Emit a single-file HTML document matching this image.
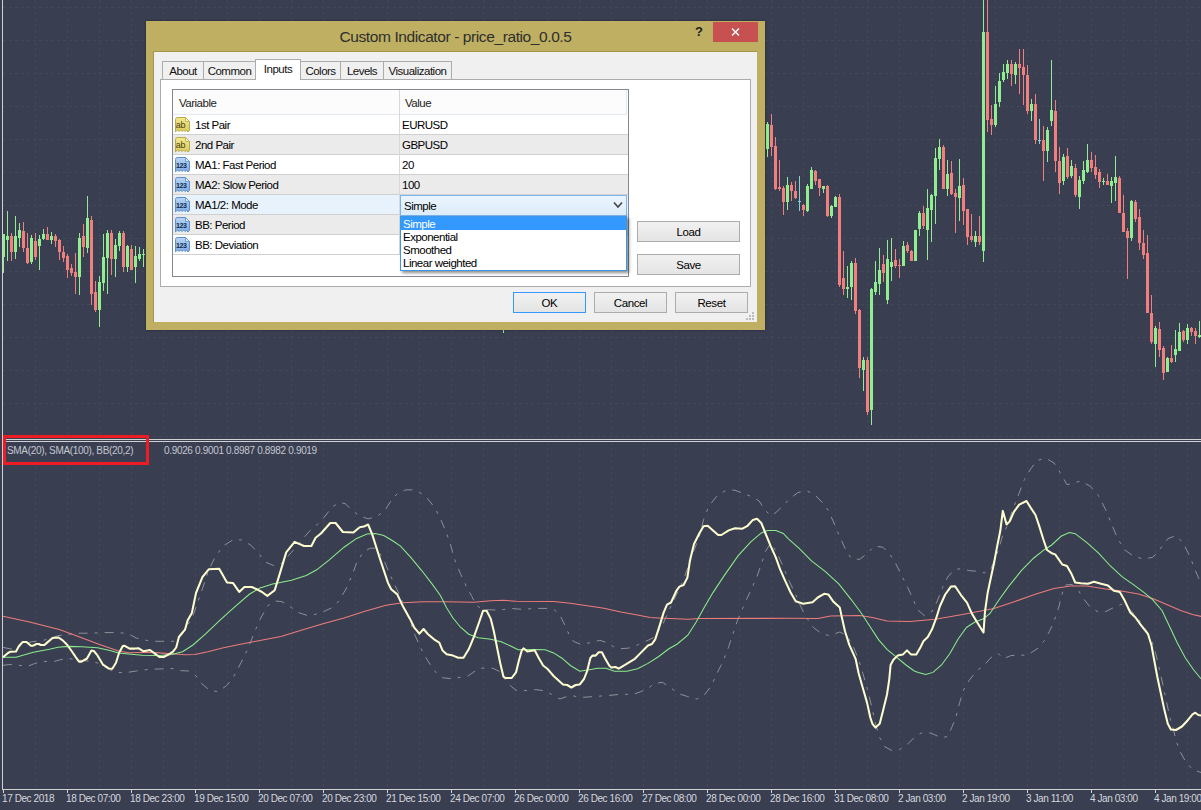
<!DOCTYPE html>
<html lang="en">
<head>
<meta charset="utf-8">
<title>Custom Indicator - price_ratio_0.0.5</title>
<style>
html,body{margin:0;padding:0;}
body{width:1201px;height:810px;overflow:hidden;background:#393e50;position:relative;font-family:"Liberation Sans",sans-serif;}
.chart{position:absolute;left:0;top:0;}
.tl{position:absolute;top:792px;font-size:10px;line-height:14px;color:#d6d8de;white-space:nowrap;letter-spacing:-0.42px;}
.ind{position:absolute;top:444px;font-size:10px;line-height:14px;color:#c4c7d0;white-space:nowrap;letter-spacing:-0.33px;}
.redbox{position:absolute;left:3px;top:435px;width:140px;height:24px;border:3px solid #ed1c24;}
/* dialog */
.dlg{position:absolute;left:146px;top:21px;width:619px;height:309px;background:#beaf62;box-shadow:0 0 2px rgba(20,22,35,.55);}
.dlg .title{position:absolute;left:0;right:0;top:6px;text-align:center;font-size:15.5px;line-height:20px;color:#2e2e2e;letter-spacing:-0.4px;}
.dlg .help{position:absolute;left:549px;top:3px;font-size:13px;font-weight:bold;line-height:16px;color:#222;}
.dlg .close{position:absolute;left:567px;top:1px;width:45px;height:20px;background:#c75050;}
.client{position:absolute;left:7px;top:30px;width:603px;height:270px;background:#f0f0f0;border:1px solid #a39648;border-right-color:#beaf62;border-bottom-color:#beaf62;}
.tab{position:absolute;top:9px;height:18px;box-sizing:border-box;border:1px solid #acacac;border-bottom:none;background:#f0f0f0;font-size:11.5px;line-height:18px;color:#111;text-align:center;letter-spacing:-0.5px;}
.tab.sel{top:7px;height:21px;background:#fff;z-index:2;line-height:18px;}
.page{position:absolute;left:6px;top:27px;width:591px;height:208px;box-sizing:border-box;background:#fff;border:1px solid #acacac;}
.list{position:absolute;left:18px;top:37px;width:457px;height:188px;box-sizing:border-box;border:1px solid #828790;background:#fff;overflow:hidden;}
.hdr{position:absolute;left:0;top:0;width:453px;height:24px;border-bottom:1px solid #e3e9f1;border-right:1px solid #e3e9f1;background:#fcfcfc;}
.hdr span{position:absolute;top:6px;font-size:11.5px;line-height:14px;color:#222;letter-spacing:-0.5px;}
.row{position:absolute;left:0;width:455px;height:19px;border-bottom:1px solid #d0d0d0;font-size:11.5px;line-height:21px;color:#000;letter-spacing:-0.5px;}
.row.alt{background:#ebebeb;}
.row.hl{background:#e8f2fc;}
.row .n{position:absolute;left:22px;top:0;}
.row .v{position:absolute;left:229px;top:0;}
.row .ic{position:absolute;left:1px;top:2px;line-height:0;}
.coldiv{position:absolute;left:226px;top:0;width:1px;height:165px;background:#d8d8d8;}
.combo{position:absolute;left:227px;top:105px;width:227px;height:21px;box-sizing:border-box;border:1px solid #7eb4ea;background:linear-gradient(#ebf4fc,#dcecfc);font-size:11.5px;line-height:21px;letter-spacing:-0.5px;}
.combo span{position:absolute;left:3px;top:0;}
.drop{position:absolute;left:254px;top:195px;width:227px;height:55px;box-sizing:border-box;border:1px solid #3c96e8;background:#fff;box-shadow:2px 2px 3px rgba(0,0,0,.45);font-size:11.5px;letter-spacing:-0.5px;z-index:5;}
.drop div{height:13px;line-height:15px;padding-left:2px;color:#000;}
.drop div.s{background:#3399ff;color:#fff;}
.btn{position:absolute;height:21px;box-sizing:border-box;border:1px solid #acacac;background:linear-gradient(#f1f1f1,#e4e4e4);font-size:11.5px;line-height:20px;text-align:center;color:#000;letter-spacing:-0.4px;}
.btn.def{border-color:#3399ff;}
</style>
</head>
<body>
<svg class="chart" width="1201" height="810" viewBox="0 0 1201 810">
<g stroke="#42475a" stroke-width="1" stroke-dasharray="3 3" shape-rendering="crispEdges"><line x1="35.5" y1="0" x2="35.5" y2="438"/><line x1="35.5" y1="442" x2="35.5" y2="789"/><line x1="67.5" y1="0" x2="67.5" y2="438"/><line x1="67.5" y1="442" x2="67.5" y2="789"/><line x1="99.5" y1="0" x2="99.5" y2="438"/><line x1="99.5" y1="442" x2="99.5" y2="789"/><line x1="131.5" y1="0" x2="131.5" y2="438"/><line x1="131.5" y1="442" x2="131.5" y2="789"/><line x1="163.5" y1="0" x2="163.5" y2="438"/><line x1="163.5" y1="442" x2="163.5" y2="789"/><line x1="195.5" y1="0" x2="195.5" y2="438"/><line x1="195.5" y1="442" x2="195.5" y2="789"/><line x1="227.5" y1="0" x2="227.5" y2="438"/><line x1="227.5" y1="442" x2="227.5" y2="789"/><line x1="259.5" y1="0" x2="259.5" y2="438"/><line x1="259.5" y1="442" x2="259.5" y2="789"/><line x1="291.5" y1="0" x2="291.5" y2="438"/><line x1="291.5" y1="442" x2="291.5" y2="789"/><line x1="323.5" y1="0" x2="323.5" y2="438"/><line x1="323.5" y1="442" x2="323.5" y2="789"/><line x1="355.5" y1="0" x2="355.5" y2="438"/><line x1="355.5" y1="442" x2="355.5" y2="789"/><line x1="387.5" y1="0" x2="387.5" y2="438"/><line x1="387.5" y1="442" x2="387.5" y2="789"/><line x1="419.5" y1="0" x2="419.5" y2="438"/><line x1="419.5" y1="442" x2="419.5" y2="789"/><line x1="451.5" y1="0" x2="451.5" y2="438"/><line x1="451.5" y1="442" x2="451.5" y2="789"/><line x1="483.5" y1="0" x2="483.5" y2="438"/><line x1="483.5" y1="442" x2="483.5" y2="789"/><line x1="515.5" y1="0" x2="515.5" y2="438"/><line x1="515.5" y1="442" x2="515.5" y2="789"/><line x1="547.5" y1="0" x2="547.5" y2="438"/><line x1="547.5" y1="442" x2="547.5" y2="789"/><line x1="579.5" y1="0" x2="579.5" y2="438"/><line x1="579.5" y1="442" x2="579.5" y2="789"/><line x1="611.5" y1="0" x2="611.5" y2="438"/><line x1="611.5" y1="442" x2="611.5" y2="789"/><line x1="643.5" y1="0" x2="643.5" y2="438"/><line x1="643.5" y1="442" x2="643.5" y2="789"/><line x1="675.5" y1="0" x2="675.5" y2="438"/><line x1="675.5" y1="442" x2="675.5" y2="789"/><line x1="707.5" y1="0" x2="707.5" y2="438"/><line x1="707.5" y1="442" x2="707.5" y2="789"/><line x1="739.5" y1="0" x2="739.5" y2="438"/><line x1="739.5" y1="442" x2="739.5" y2="789"/><line x1="771.5" y1="0" x2="771.5" y2="438"/><line x1="771.5" y1="442" x2="771.5" y2="789"/><line x1="803.5" y1="0" x2="803.5" y2="438"/><line x1="803.5" y1="442" x2="803.5" y2="789"/><line x1="835.5" y1="0" x2="835.5" y2="438"/><line x1="835.5" y1="442" x2="835.5" y2="789"/><line x1="867.5" y1="0" x2="867.5" y2="438"/><line x1="867.5" y1="442" x2="867.5" y2="789"/><line x1="899.5" y1="0" x2="899.5" y2="438"/><line x1="899.5" y1="442" x2="899.5" y2="789"/><line x1="931.5" y1="0" x2="931.5" y2="438"/><line x1="931.5" y1="442" x2="931.5" y2="789"/><line x1="963.5" y1="0" x2="963.5" y2="438"/><line x1="963.5" y1="442" x2="963.5" y2="789"/><line x1="995.5" y1="0" x2="995.5" y2="438"/><line x1="995.5" y1="442" x2="995.5" y2="789"/><line x1="1027.5" y1="0" x2="1027.5" y2="438"/><line x1="1027.5" y1="442" x2="1027.5" y2="789"/><line x1="1059.5" y1="0" x2="1059.5" y2="438"/><line x1="1059.5" y1="442" x2="1059.5" y2="789"/><line x1="1091.5" y1="0" x2="1091.5" y2="438"/><line x1="1091.5" y1="442" x2="1091.5" y2="789"/><line x1="1123.5" y1="0" x2="1123.5" y2="438"/><line x1="1123.5" y1="442" x2="1123.5" y2="789"/><line x1="1155.5" y1="0" x2="1155.5" y2="438"/><line x1="1155.5" y1="442" x2="1155.5" y2="789"/><line x1="1187.5" y1="0" x2="1187.5" y2="438"/><line x1="1187.5" y1="442" x2="1187.5" y2="789"/><line x1="3" y1="7.5" x2="1201" y2="7.5"/><line x1="3" y1="40.5" x2="1201" y2="40.5"/><line x1="3" y1="73.5" x2="1201" y2="73.5"/><line x1="3" y1="106.5" x2="1201" y2="106.5"/><line x1="3" y1="139.5" x2="1201" y2="139.5"/><line x1="3" y1="172.5" x2="1201" y2="172.5"/><line x1="3" y1="205.5" x2="1201" y2="205.5"/><line x1="3" y1="238.5" x2="1201" y2="238.5"/><line x1="3" y1="271.5" x2="1201" y2="271.5"/><line x1="3" y1="304.5" x2="1201" y2="304.5"/><line x1="3" y1="337.5" x2="1201" y2="337.5"/><line x1="3" y1="370.5" x2="1201" y2="370.5"/><line x1="3" y1="403.5" x2="1201" y2="403.5"/><line x1="3" y1="436.5" x2="1201" y2="436.5"/></g>
<g shape-rendering="crispEdges"><rect x="3" y="234" width="1" height="39" fill="#90ee90"/><rect x="2" y="234" width="3" height="23" fill="#90ee90"/><rect x="7" y="211" width="1" height="50" fill="#90ee90"/><rect x="6" y="236" width="3" height="4" fill="#90ee90"/><rect x="11" y="233" width="1" height="28" fill="#f08080"/><rect x="10" y="236" width="3" height="16" fill="#f08080"/><rect x="15" y="216" width="1" height="43" fill="#90ee90"/><rect x="14" y="236" width="3" height="16" fill="#90ee90"/><rect x="19" y="223" width="1" height="24" fill="#90ee90"/><rect x="18" y="230" width="3" height="8" fill="#90ee90"/><rect x="23" y="222" width="1" height="30" fill="#f08080"/><rect x="22" y="231" width="3" height="17" fill="#f08080"/><rect x="27" y="233" width="1" height="31" fill="#f08080"/><rect x="26" y="248" width="3" height="15" fill="#f08080"/><rect x="31" y="235" width="1" height="29" fill="#90ee90"/><rect x="30" y="238" width="3" height="24" fill="#90ee90"/><rect x="35" y="233" width="1" height="27" fill="#f08080"/><rect x="34" y="241" width="3" height="16" fill="#f08080"/><rect x="39" y="235" width="1" height="35" fill="#90ee90"/><rect x="38" y="239" width="3" height="7" fill="#90ee90"/><rect x="43" y="229" width="1" height="11" fill="#90ee90"/><rect x="42" y="234" width="3" height="5" fill="#90ee90"/><rect x="47" y="227" width="1" height="13" fill="#f08080"/><rect x="46" y="234" width="3" height="6" fill="#f08080"/><rect x="51" y="232" width="1" height="12" fill="#90ee90"/><rect x="50" y="236" width="3" height="4" fill="#90ee90"/><rect x="55" y="234" width="1" height="13" fill="#f08080"/><rect x="54" y="236" width="3" height="5" fill="#f08080"/><rect x="59" y="239" width="1" height="21" fill="#f08080"/><rect x="58" y="240" width="3" height="12" fill="#f08080"/><rect x="63" y="246" width="1" height="16" fill="#f08080"/><rect x="62" y="252" width="3" height="6" fill="#f08080"/><rect x="67" y="254" width="1" height="24" fill="#f08080"/><rect x="66" y="256" width="3" height="14" fill="#f08080"/><rect x="71" y="264" width="1" height="12" fill="#f08080"/><rect x="70" y="268" width="3" height="5" fill="#f08080"/><rect x="75" y="253" width="1" height="41" fill="#f08080"/><rect x="74" y="272" width="3" height="5" fill="#f08080"/><rect x="79" y="233" width="1" height="62" fill="#90ee90"/><rect x="78" y="238" width="3" height="39" fill="#90ee90"/><rect x="83" y="224" width="1" height="33" fill="#f08080"/><rect x="82" y="236" width="3" height="11" fill="#f08080"/><rect x="87" y="196" width="1" height="57" fill="#90ee90"/><rect x="86" y="218" width="3" height="30" fill="#90ee90"/><rect x="91" y="216" width="1" height="89" fill="#f08080"/><rect x="90" y="220" width="3" height="74" fill="#f08080"/><rect x="95" y="281" width="1" height="31" fill="#f08080"/><rect x="94" y="292" width="3" height="18" fill="#f08080"/><rect x="99" y="276" width="1" height="51" fill="#90ee90"/><rect x="98" y="282" width="3" height="28" fill="#90ee90"/><rect x="103" y="234" width="1" height="57" fill="#90ee90"/><rect x="102" y="257" width="3" height="26" fill="#90ee90"/><rect x="107" y="230" width="1" height="64" fill="#90ee90"/><rect x="106" y="233" width="3" height="25" fill="#90ee90"/><rect x="111" y="230" width="1" height="45" fill="#f08080"/><rect x="110" y="233" width="3" height="26" fill="#f08080"/><rect x="115" y="239" width="1" height="38" fill="#90ee90"/><rect x="114" y="245" width="3" height="14" fill="#90ee90"/><rect x="119" y="231" width="1" height="20" fill="#90ee90"/><rect x="118" y="233" width="3" height="13" fill="#90ee90"/><rect x="123" y="231" width="1" height="41" fill="#f08080"/><rect x="122" y="233" width="3" height="34" fill="#f08080"/><rect x="127" y="245" width="1" height="27" fill="#90ee90"/><rect x="126" y="246" width="3" height="21" fill="#90ee90"/><rect x="131" y="245" width="1" height="25" fill="#f08080"/><rect x="130" y="249" width="3" height="21" fill="#f08080"/><rect x="135" y="246" width="1" height="37" fill="#90ee90"/><rect x="134" y="256" width="3" height="11" fill="#90ee90"/><rect x="139" y="247" width="1" height="14" fill="#90ee90"/><rect x="138" y="254" width="3" height="5" fill="#90ee90"/><rect x="143" y="249" width="1" height="18" fill="#90ee90"/><rect x="142" y="254" width="3" height="1" fill="#90ee90"/><rect x="503" y="329" width="1" height="4" fill="#90ee90"/><rect x="502" y="329" width="3" height="1" fill="#90ee90"/><rect x="767" y="122" width="1" height="35" fill="#90ee90"/><rect x="766" y="124" width="3" height="25" fill="#90ee90"/><rect x="771" y="114" width="1" height="42" fill="#f08080"/><rect x="770" y="125" width="3" height="22" fill="#f08080"/><rect x="775" y="137" width="1" height="53" fill="#f08080"/><rect x="774" y="146" width="3" height="43" fill="#f08080"/><rect x="779" y="160" width="1" height="31" fill="#f08080"/><rect x="778" y="187" width="3" height="2" fill="#f08080"/><rect x="783" y="186" width="1" height="29" fill="#f08080"/><rect x="782" y="188" width="3" height="14" fill="#f08080"/><rect x="787" y="177" width="1" height="33" fill="#90ee90"/><rect x="786" y="185" width="3" height="17" fill="#90ee90"/><rect x="791" y="182" width="1" height="19" fill="#f08080"/><rect x="790" y="185" width="3" height="6" fill="#f08080"/><rect x="795" y="181" width="1" height="18" fill="#f08080"/><rect x="794" y="191" width="3" height="7" fill="#f08080"/><rect x="799" y="176" width="1" height="35" fill="#7fd6d0"/><rect x="798" y="201" width="3" height="1" fill="#7fd6d0"/><rect x="803" y="204" width="1" height="12" fill="#f08080"/><rect x="802" y="205" width="3" height="5" fill="#f08080"/><rect x="807" y="184" width="1" height="28" fill="#90ee90"/><rect x="806" y="186" width="3" height="25" fill="#90ee90"/><rect x="811" y="167" width="1" height="22" fill="#90ee90"/><rect x="810" y="170" width="3" height="19" fill="#90ee90"/><rect x="815" y="170" width="1" height="15" fill="#f08080"/><rect x="814" y="171" width="3" height="10" fill="#f08080"/><rect x="819" y="179" width="1" height="17" fill="#f08080"/><rect x="818" y="179" width="3" height="9" fill="#f08080"/><rect x="823" y="186" width="1" height="7" fill="#90ee90"/><rect x="822" y="186" width="3" height="3" fill="#90ee90"/><rect x="827" y="185" width="1" height="32" fill="#f08080"/><rect x="826" y="186" width="3" height="30" fill="#f08080"/><rect x="831" y="205" width="1" height="13" fill="#90ee90"/><rect x="830" y="206" width="3" height="10" fill="#90ee90"/><rect x="835" y="196" width="1" height="11" fill="#90ee90"/><rect x="834" y="197" width="3" height="10" fill="#90ee90"/><rect x="839" y="194" width="1" height="93" fill="#f08080"/><rect x="838" y="197" width="3" height="88" fill="#f08080"/><rect x="843" y="251" width="1" height="44" fill="#f08080"/><rect x="842" y="278" width="3" height="11" fill="#f08080"/><rect x="847" y="266" width="1" height="32" fill="#90ee90"/><rect x="846" y="287" width="3" height="2" fill="#90ee90"/><rect x="851" y="261" width="1" height="39" fill="#90ee90"/><rect x="850" y="263" width="3" height="24" fill="#90ee90"/><rect x="855" y="258" width="1" height="56" fill="#f08080"/><rect x="854" y="263" width="3" height="48" fill="#f08080"/><rect x="859" y="309" width="1" height="69" fill="#f08080"/><rect x="858" y="310" width="3" height="58" fill="#f08080"/><rect x="863" y="357" width="1" height="34" fill="#90ee90"/><rect x="862" y="360" width="3" height="10" fill="#90ee90"/><rect x="867" y="357" width="1" height="58" fill="#f08080"/><rect x="866" y="360" width="3" height="52" fill="#f08080"/><rect x="871" y="288" width="1" height="137" fill="#90ee90"/><rect x="870" y="289" width="3" height="121" fill="#90ee90"/><rect x="875" y="261" width="1" height="34" fill="#90ee90"/><rect x="874" y="282" width="3" height="10" fill="#90ee90"/><rect x="879" y="248" width="1" height="47" fill="#90ee90"/><rect x="878" y="270" width="3" height="14" fill="#90ee90"/><rect x="883" y="255" width="1" height="27" fill="#f08080"/><rect x="882" y="264" width="3" height="9" fill="#f08080"/><rect x="887" y="240" width="1" height="64" fill="#90ee90"/><rect x="886" y="259" width="3" height="41" fill="#90ee90"/><rect x="891" y="238" width="1" height="43" fill="#90ee90"/><rect x="890" y="262" width="3" height="5" fill="#90ee90"/><rect x="895" y="249" width="1" height="19" fill="#f08080"/><rect x="894" y="260" width="3" height="6" fill="#f08080"/><rect x="899" y="259" width="1" height="19" fill="#f08080"/><rect x="898" y="265" width="3" height="1" fill="#f08080"/><rect x="903" y="241" width="1" height="25" fill="#90ee90"/><rect x="902" y="246" width="3" height="20" fill="#90ee90"/><rect x="907" y="242" width="1" height="11" fill="#f08080"/><rect x="906" y="245" width="3" height="6" fill="#f08080"/><rect x="911" y="250" width="1" height="11" fill="#f08080"/><rect x="910" y="251" width="3" height="10" fill="#f08080"/><rect x="915" y="230" width="1" height="31" fill="#90ee90"/><rect x="914" y="230" width="3" height="31" fill="#90ee90"/><rect x="919" y="211" width="1" height="25" fill="#90ee90"/><rect x="918" y="213" width="3" height="16" fill="#90ee90"/><rect x="923" y="206" width="1" height="23" fill="#f08080"/><rect x="922" y="213" width="3" height="13" fill="#f08080"/><rect x="927" y="189" width="1" height="71" fill="#90ee90"/><rect x="926" y="208" width="3" height="22" fill="#90ee90"/><rect x="931" y="194" width="1" height="48" fill="#90ee90"/><rect x="930" y="195" width="3" height="15" fill="#90ee90"/><rect x="935" y="148" width="1" height="76" fill="#90ee90"/><rect x="934" y="158" width="3" height="38" fill="#90ee90"/><rect x="939" y="139" width="1" height="31" fill="#90ee90"/><rect x="938" y="147" width="3" height="12" fill="#90ee90"/><rect x="943" y="145" width="1" height="44" fill="#f08080"/><rect x="942" y="147" width="3" height="42" fill="#f08080"/><rect x="947" y="160" width="1" height="36" fill="#90ee90"/><rect x="946" y="174" width="3" height="15" fill="#90ee90"/><rect x="951" y="161" width="1" height="34" fill="#f08080"/><rect x="950" y="173" width="3" height="21" fill="#f08080"/><rect x="955" y="189" width="1" height="44" fill="#f08080"/><rect x="954" y="193" width="3" height="4" fill="#f08080"/><rect x="959" y="159" width="1" height="62" fill="#90ee90"/><rect x="958" y="186" width="3" height="12" fill="#90ee90"/><rect x="963" y="178" width="1" height="47" fill="#f08080"/><rect x="962" y="185" width="3" height="26" fill="#f08080"/><rect x="967" y="209" width="1" height="36" fill="#f08080"/><rect x="966" y="209" width="3" height="28" fill="#f08080"/><rect x="971" y="214" width="1" height="28" fill="#f08080"/><rect x="970" y="236" width="3" height="4" fill="#f08080"/><rect x="975" y="231" width="1" height="16" fill="#90ee90"/><rect x="974" y="236" width="3" height="6" fill="#90ee90"/><rect x="979" y="216" width="1" height="29" fill="#f08080"/><rect x="978" y="236" width="3" height="6" fill="#f08080"/><rect x="983" y="0" width="1" height="262" fill="#90ee90"/><rect x="982" y="32" width="3" height="219" fill="#90ee90"/><rect x="987" y="0" width="1" height="132" fill="#f08080"/><rect x="986" y="32" width="3" height="88" fill="#f08080"/><rect x="991" y="105" width="1" height="30" fill="#f08080"/><rect x="990" y="119" width="3" height="6" fill="#f08080"/><rect x="995" y="86" width="1" height="41" fill="#90ee90"/><rect x="994" y="104" width="3" height="21" fill="#90ee90"/><rect x="999" y="73" width="1" height="34" fill="#90ee90"/><rect x="998" y="81" width="3" height="21" fill="#90ee90"/><rect x="1003" y="64" width="1" height="18" fill="#90ee90"/><rect x="1002" y="72" width="3" height="8" fill="#90ee90"/><rect x="1007" y="60" width="1" height="19" fill="#90ee90"/><rect x="1006" y="64" width="3" height="9" fill="#90ee90"/><rect x="1011" y="60" width="1" height="26" fill="#f08080"/><rect x="1010" y="64" width="3" height="10" fill="#f08080"/><rect x="1015" y="62" width="1" height="22" fill="#90ee90"/><rect x="1014" y="64" width="3" height="11" fill="#90ee90"/><rect x="1019" y="49" width="1" height="45" fill="#f08080"/><rect x="1018" y="64" width="3" height="4" fill="#f08080"/><rect x="1023" y="49" width="1" height="56" fill="#f08080"/><rect x="1022" y="67" width="3" height="8" fill="#f08080"/><rect x="1027" y="65" width="1" height="49" fill="#f08080"/><rect x="1026" y="75" width="3" height="36" fill="#f08080"/><rect x="1031" y="99" width="1" height="22" fill="#90ee90"/><rect x="1030" y="104" width="3" height="7" fill="#90ee90"/><rect x="1035" y="94" width="1" height="50" fill="#f08080"/><rect x="1034" y="104" width="3" height="36" fill="#f08080"/><rect x="1039" y="119" width="1" height="25" fill="#7fd6d0"/><rect x="1038" y="140" width="3" height="1" fill="#7fd6d0"/><rect x="1043" y="126" width="1" height="55" fill="#f08080"/><rect x="1042" y="140" width="3" height="11" fill="#f08080"/><rect x="1047" y="127" width="1" height="35" fill="#90ee90"/><rect x="1046" y="130" width="3" height="21" fill="#90ee90"/><rect x="1051" y="60" width="1" height="66" fill="#90ee90"/><rect x="1050" y="110" width="3" height="11" fill="#90ee90"/><rect x="1055" y="100" width="1" height="72" fill="#f08080"/><rect x="1054" y="111" width="3" height="50" fill="#f08080"/><rect x="1059" y="147" width="1" height="47" fill="#f08080"/><rect x="1058" y="161" width="3" height="22" fill="#f08080"/><rect x="1063" y="154" width="1" height="31" fill="#90ee90"/><rect x="1062" y="157" width="3" height="24" fill="#90ee90"/><rect x="1067" y="148" width="1" height="31" fill="#f08080"/><rect x="1066" y="156" width="3" height="21" fill="#f08080"/><rect x="1071" y="160" width="1" height="18" fill="#90ee90"/><rect x="1070" y="166" width="3" height="10" fill="#90ee90"/><rect x="1075" y="164" width="1" height="33" fill="#f08080"/><rect x="1074" y="168" width="3" height="27" fill="#f08080"/><rect x="1079" y="176" width="1" height="33" fill="#90ee90"/><rect x="1078" y="180" width="3" height="17" fill="#90ee90"/><rect x="1083" y="161" width="1" height="23" fill="#90ee90"/><rect x="1082" y="170" width="3" height="11" fill="#90ee90"/><rect x="1087" y="144" width="1" height="29" fill="#90ee90"/><rect x="1086" y="160" width="3" height="12" fill="#90ee90"/><rect x="1091" y="152" width="1" height="20" fill="#f08080"/><rect x="1090" y="160" width="3" height="8" fill="#f08080"/><rect x="1095" y="155" width="1" height="24" fill="#f08080"/><rect x="1094" y="167" width="3" height="8" fill="#f08080"/><rect x="1099" y="169" width="1" height="19" fill="#f08080"/><rect x="1098" y="172" width="3" height="10" fill="#f08080"/><rect x="1103" y="178" width="1" height="7" fill="#90ee90"/><rect x="1102" y="181" width="3" height="1" fill="#90ee90"/><rect x="1107" y="174" width="1" height="11" fill="#f08080"/><rect x="1106" y="181" width="3" height="4" fill="#f08080"/><rect x="1111" y="177" width="1" height="26" fill="#90ee90"/><rect x="1110" y="181" width="3" height="5" fill="#90ee90"/><rect x="1115" y="156" width="1" height="45" fill="#90ee90"/><rect x="1114" y="177" width="3" height="6" fill="#90ee90"/><rect x="1119" y="176" width="1" height="37" fill="#f08080"/><rect x="1118" y="178" width="3" height="35" fill="#f08080"/><rect x="1123" y="195" width="1" height="37" fill="#f08080"/><rect x="1122" y="213" width="3" height="19" fill="#f08080"/><rect x="1127" y="228" width="1" height="51" fill="#f08080"/><rect x="1126" y="231" width="3" height="7" fill="#f08080"/><rect x="1131" y="200" width="1" height="41" fill="#90ee90"/><rect x="1130" y="201" width="3" height="37" fill="#90ee90"/><rect x="1135" y="200" width="1" height="22" fill="#f08080"/><rect x="1134" y="202" width="3" height="17" fill="#f08080"/><rect x="1139" y="209" width="1" height="41" fill="#f08080"/><rect x="1138" y="217" width="3" height="26" fill="#f08080"/><rect x="1143" y="230" width="1" height="29" fill="#f08080"/><rect x="1142" y="243" width="3" height="12" fill="#f08080"/><rect x="1147" y="235" width="1" height="78" fill="#f08080"/><rect x="1146" y="253" width="3" height="60" fill="#f08080"/><rect x="1151" y="295" width="1" height="49" fill="#f08080"/><rect x="1150" y="313" width="3" height="29" fill="#f08080"/><rect x="1155" y="326" width="1" height="41" fill="#90ee90"/><rect x="1154" y="328" width="3" height="16" fill="#90ee90"/><rect x="1159" y="322" width="1" height="35" fill="#f08080"/><rect x="1158" y="329" width="3" height="21" fill="#f08080"/><rect x="1163" y="346" width="1" height="34" fill="#f08080"/><rect x="1162" y="348" width="3" height="25" fill="#f08080"/><rect x="1167" y="357" width="1" height="15" fill="#90ee90"/><rect x="1166" y="358" width="3" height="14" fill="#90ee90"/><rect x="1171" y="345" width="1" height="18" fill="#f08080"/><rect x="1170" y="358" width="3" height="4" fill="#f08080"/><rect x="1175" y="330" width="1" height="32" fill="#90ee90"/><rect x="1174" y="349" width="3" height="6" fill="#90ee90"/><rect x="1179" y="323" width="1" height="28" fill="#90ee90"/><rect x="1178" y="332" width="3" height="19" fill="#90ee90"/><rect x="1183" y="330" width="1" height="12" fill="#f08080"/><rect x="1182" y="331" width="3" height="9" fill="#f08080"/><rect x="1187" y="324" width="1" height="20" fill="#90ee90"/><rect x="1186" y="328" width="3" height="12" fill="#90ee90"/><rect x="1191" y="327" width="1" height="9" fill="#f08080"/><rect x="1190" y="328" width="3" height="4" fill="#f08080"/><rect x="1195" y="328" width="1" height="16" fill="#f08080"/><rect x="1194" y="331" width="3" height="5" fill="#f08080"/><rect x="1199" y="321" width="1" height="17" fill="#90ee90"/><rect x="1198" y="335" width="3" height="2" fill="#90ee90"/></g>
<g shape-rendering="crispEdges" fill="#d2d2d2"><rect x="2" y="0" width="1" height="790"/><rect x="2" y="439" width="1201" height="1"/><rect x="2" y="441" width="1201" height="1"/><rect x="2" y="789" width="1201" height="1"/><rect x="3" y="790" width="1" height="3"/><rect x="67" y="790" width="1" height="3"/><rect x="131" y="790" width="1" height="3"/><rect x="195" y="790" width="1" height="3"/><rect x="259" y="790" width="1" height="3"/><rect x="323" y="790" width="1" height="3"/><rect x="387" y="790" width="1" height="3"/><rect x="451" y="790" width="1" height="3"/><rect x="515" y="790" width="1" height="3"/><rect x="579" y="790" width="1" height="3"/><rect x="643" y="790" width="1" height="3"/><rect x="707" y="790" width="1" height="3"/><rect x="771" y="790" width="1" height="3"/><rect x="835" y="790" width="1" height="3"/><rect x="899" y="790" width="1" height="3"/><rect x="963" y="790" width="1" height="3"/><rect x="1027" y="790" width="1" height="3"/><rect x="1091" y="790" width="1" height="3"/><rect x="1155" y="790" width="1" height="3"/></g>
<polyline points="3,647.4 11,649 20,646 30.9,641.9 43.2,640.4 58,635.7 67.3,634.4 80.2,633.2 91.4,633.2 103.7,632.6 115.4,632.6 126,633.2 131.5,635.4 136.3,638.1 151,641.3 176.2,641.3 179.3,637 186,628 193,616 197.2,603.5 202.4,588.8 208.7,569.9 215,557.3 223.4,545.7 233.9,539.4 241.3,539.9 250.7,545 259.1,554 265.2,561.9 273.6,565.6 281,564 291.5,552.4 301,540.9 309.3,531.4 316.7,525 324,517.4 332.4,506.9 338.7,502.7 345,503.5 352.4,510.4 359.7,516 368.1,518.8 376.5,516.7 384.9,510.4 391.2,500.5 397.3,493.6 405.7,489.9 413.1,489.9 421.5,493.6 428.8,500 435.1,508.3 441.4,520.9 446.7,533.5 450.9,546.1 455.1,560.8 460.3,573.4 466.6,587 471.9,596.5 476.1,604.9 482.4,609.5 499.2,610.1 511.7,608.5 524.3,609.5 532.6,608.4 547.3,608.4 554.6,609.9 559.9,615.1 565.1,625.6 569.3,635 573.5,641.4 580.9,644.5 591.4,642.4 599.8,640.3 606,642.4 613.4,646.6 620.8,648.7 629.2,648 638.6,644.5 648,640.3 654.3,637.2 662.6,624.8 672,603.8 683.6,579.7 692,555.6 699.3,536.7 703.5,519.9 708.8,506.2 717.2,495.7 725.6,490.5 734,490 742.4,493 752.9,497.2 759.2,501 764.4,509.4 770.7,515.7 775.9,512.5 783.3,505.6 788.4,500 797.8,492.6 806.2,490.5 814.6,494.7 822,502 828.3,510.4 833.5,522 838.8,534.6 845,548.2 851.4,558.7 859.8,559.3 867.1,553.5 874.5,546.1 882.9,547.2 889.2,553.5 895.4,562.9 901.7,575.5 908,588.1 914.3,602 917.3,609.5 924.7,615.8 932,611.6 937.3,601 942.5,587.5 947.8,577 954,569.6 961.4,568.6 969.8,570.7 977.2,571.3 984.5,572.8 990,571 998.2,550.8 1003.4,532.9 1007.6,525.6 1012.9,508.8 1019.2,493 1024.4,479.4 1030.7,468.9 1037,460.5 1044.3,458.4 1047,458.9 1054,462.9 1060,472.3 1067,484.7 1074,482.8 1081,481 1090.4,486.4 1098.6,495.7 1105.7,509.8 1111.5,523.9 1117.4,538 1124.4,549.7 1132.7,555.6 1143.2,559 1152.6,557.4 1159.6,549.7 1167.8,538.7 1176,535.6 1183,542.7 1190,556.7 1196,572 1201,583.7" fill="none" stroke="#8f9096" stroke-width="1" stroke-dasharray="9 7 3 7"/>
<polyline points="3,665.3 11,664.4 19,665.3 27.8,666.3 34.6,663.5 43.2,661.4 54.3,661.4 59.3,660 67.3,658.3 76.5,659.8 91.4,661.4 99.4,663.5 105,667 115.4,672.5 127,672.5 138.4,670.6 151,669.2 175.1,668.5 180.4,670.6 188.8,671 196.1,675.9 201.4,683.2 209.8,690.6 218.2,691.6 226.6,685.7 232.9,678 241.3,662.2 247.5,649.6 251.7,639.2 256,628.7 260,619.6 267.3,606 275.7,601 282,601.7 291.5,607.6 298.8,612.7 307.2,615.4 315.6,614.3 323,611.8 331.4,608 338.7,601.3 346,589 351.3,577 356.6,562.9 362.9,552.4 370.2,548.2 376.5,548.2 383.8,559.8 389.1,572.4 394.2,583.9 399.4,594.4 405,608 410,621 415.2,635.7 420.4,647.2 424.6,655.6 429.9,664 435.1,671.4 442.5,677.7 450.9,678.7 461.4,677.2 468.7,675.6 476.1,670.3 481.3,668.2 492.9,668.2 499.2,671.4 504.4,678.7 510.7,686 516,690.3 528.5,690.7 535.7,689.6 544.1,690.7 551.5,694.3 559.9,699 568.3,696 573.5,696 581.9,697.4 593.5,696.6 608.2,695.5 620.8,694.3 633.4,694.3 640.7,691.7 648,688.6 654.2,683.4 662.6,682.4 671,688.2 679.4,693.9 687.8,696.6 696.2,699.2 703.5,696 710.9,686.6 717.2,672.9 723.5,660.3 728.7,646.7 732.9,634 737.1,621.5 742.4,608.9 746.6,599.4 751.8,588.1 757,576.6 761.3,564 765.5,551.4 770.7,543 774,548 778,555 782,564 785.2,571.5 790.5,584 795.7,594.4 800,604.9 804.1,613.3 808.3,620.3 813.6,627.6 822,634 829.3,635.5 839.8,632 847.2,635.7 853.5,647.2 858.7,659.8 862.9,673.5 867.1,688.2 871.3,705 875.5,723.8 879.7,737.5 885,746.9 892.3,750.7 899.6,749.5 908,743.8 914.3,737.5 921.5,732.8 931,733.2 941.5,737.8 947.8,736.4 952,726.9 956.2,716.4 959.3,703.8 963.5,690.2 968.8,680.8 977.2,670.3 983.5,666 990.8,657.7 998.2,653.5 1003.4,658.7 1010.8,655.6 1027.5,655 1038,648.2 1044.7,640.2 1049.4,631.4 1054,621.5 1058.8,606.8 1062.9,591 1065.8,584.9 1072,584.5 1078.7,591 1083.4,598.6 1090.4,607.4 1098.6,612.1 1105.7,611.6 1113.9,607.4 1122,604 1128,607.6 1135,615 1143.2,625.5 1151.4,639.3 1156,654.5 1159.6,669.8 1163.2,686.2 1166.7,702.6 1170.2,719 1173.7,730.7 1176,740 1179.6,750.7 1185.4,761.2 1192.5,769.5 1201,772.5" fill="none" stroke="#8f9096" stroke-width="1" stroke-dasharray="9 7 3 7"/>
<polyline points="3,616.3 29.6,621.9 59.3,629.5 79,636.7 98.8,644.3 118.5,651 128.4,652.7 140,652.5 151,652.4 172,653.8 184.6,654.7 195,654.5 207.7,651.7 222.4,648 239.2,644.4 256,641.3 281,636.4 302,630 323,623.8 344,617.9 365,611.2 386,605.3 402.6,602.8 423.6,601.7 444.6,601.7 474,602.2 490.8,600.7 503.4,600.3 516,601.3 553.6,601.5 570.4,603.2 587.2,605.7 604,608.2 620.8,612 637.5,615.1 650.1,617.6 658.4,618 687.8,619.2 700.4,618.5 790,618.3 817.8,618.5 830.4,616 859.8,615.6 872.4,617.4 887,621.1 910,621.4 935.2,619.3 962.5,614.6 994,608.5 1015,601.5 1036,594 1054,588.4 1070.5,586 1086.9,586 1105.7,589 1119.8,590.7 1138.5,594 1152.6,598.6 1166.7,604.4 1180.7,610.5 1192.5,614.5 1201,616.4" fill="none" stroke="#ee7c7c" stroke-width="1.05"/>
<polyline points="3,657.3 16,657.3 33.3,652.3 49.4,649.3 58,647.2 69,646.4 81.5,646.8 97.5,647.8 110,650.5 118.5,653 128.4,654 142.6,655.3 159.4,655.5 172,654.5 182.5,651.7 193,645 205.6,633.9 220.3,619.8 235,606.6 249.6,594 260.1,587.9 272.6,583.9 291.5,580.3 306.2,575.5 316.7,569.8 329.3,559.8 344,547.2 356.6,538.4 367,533.9 375.4,533.5 383.8,535.6 392.2,540.5 400.5,546.1 411,557.7 421.5,570.3 432,583.9 440.4,595.4 446.7,608 453,618 460.3,627 468.7,634.2 478.2,637.8 490.8,639.2 501.2,641.8 511.7,646.5 518,649.8 534.7,649.5 545.2,649.8 553.6,652.9 562,658.2 570.4,665.5 579.8,671.2 589.3,669.7 597.7,668.2 606,668.2 614.5,671.2 627,671.2 637.5,668.7 648,663.4 658.4,656.7 668.9,648.8 677.3,644 687.8,635.2 696.2,622.1 704.6,606.8 713,592.6 723.5,576.6 738.2,555.6 750.8,541.9 761.3,532.9 767.5,530.4 775.9,530.4 783.3,533.5 788.4,538.8 798.9,548.2 811.5,560.8 825.1,571.3 838.8,583.9 851.4,599.8 861.9,614 870.3,627 878.7,639.9 887,649.3 895.5,656.3 906,665 914.3,671 918.4,672.4 925.7,674.5 933,672.4 941.5,665 949.9,653.5 958.3,638.8 966.7,627.2 975,622 983.5,618.8 989.8,613.7 998.2,601 1008.7,586.4 1021.3,570.7 1033.8,558 1044.3,549.7 1051.7,545 1061,536.3 1069.3,532.6 1075.2,533.7 1086.9,542.7 1098.6,553.2 1110.4,566 1122,576.7 1133.8,584.9 1143.2,591.9 1152.6,599.7 1162,610.5 1169,625.2 1177.2,642.8 1185.4,658 1193.6,669.8 1201,678.7" fill="none" stroke="#8cec8c" stroke-width="1.05"/>
<polyline points="3,657.3 8,653 10.5,651.7 16,651.5 19,646 22.8,641.9 26.5,641.9 30.9,645.8 32.7,645.8 36.4,644 38.9,644 40.7,645 44.4,645 48,641.9 52.5,637.9 58.6,637.5 63,640.6 67.3,645 71.6,651 75.9,657.3 79,661.6 81.5,661.6 87,658.5 91.4,650.5 93.8,651 97.5,655.4 103,664.7 108.6,668.4 112.3,668.8 116,662.8 119,653 122.8,646 124.7,645.8 129.6,648.6 135,648.6 138.4,648.2 143.6,651.3 150,650 155.2,653.8 159.4,657 163.6,657 168.8,654.3 173,651.7 176.2,647.5 178.9,637 185,629.7 187.7,620.3 191.9,612.9 196,593 202.4,577.2 208.7,569.3 219.2,568.8 227,582.5 232.9,582.9 239.2,591.9 244.4,587 251.7,587 258,589.8 262,592 267.3,595.9 274.7,590.2 278.9,576.6 286.2,552.4 294.6,541.9 304,546 311.4,546 315.6,537.7 320.9,533.5 330.3,523 335.6,523 342.9,532 353.4,532.5 359.7,527.2 363.9,526.6 368.1,524.5 372.3,534.6 379.6,557.7 388,582.9 391.2,589.2 397.3,594.4 401.5,603.4 404.7,609.4 410,618.9 414.1,627.3 419.4,633.6 423.6,629 427.8,634 434,639.3 439.3,642.6 442.5,650.4 446.7,654.2 453,655.6 458.2,657.7 463.5,657.7 468.7,649.3 474,636.7 479.2,622 483,610.8 486.6,610.8 490.8,618.9 493.9,631.5 497,647.2 500.2,663 503.4,676.6 505.5,678 511.7,678 516,672.4 519.1,659.8 521.8,650.4 523.5,648.3 527.3,651.4 534.7,650.2 538.9,658.2 543.1,665.5 547.3,668.7 553.6,676 563,684.4 567.2,685 571.4,687.5 575.6,685 579.8,684.4 584,679 587.2,670.8 590.3,658.2 592.4,655.6 595.6,655.6 598.7,652.3 601.9,652.3 605,658.2 609.2,665.5 611.3,667.6 615.5,667 618.7,668.7 625,664.9 634.4,659.2 640.7,652.9 648,645.5 652,644 655.2,639.4 659.4,626.4 663.6,612.6 667,604.6 671,602.5 676.2,591.2 679.4,586.6 683.6,585 687.4,577.6 689.9,560.8 694,544 699.3,533.5 703.5,526.2 707.7,525.8 713,530.4 718.2,535 721.4,535 728.7,530.4 735,528.3 742.4,528.7 747.6,525.8 752.9,519.9 757,518.8 761.3,523 765.5,533.5 770.7,546.1 775.9,557.7 780,569.2 785.2,580.8 790.5,592.3 795.7,601.3 803.1,603.8 812.5,602.2 817.8,597.5 824.1,593.8 828.3,594.4 833.5,601.8 839.8,607.6 841.9,617.6 845,631.3 849.3,644.9 855.6,658.8 858.7,673.5 862.9,688.2 867.1,702.9 870.3,717.5 872.4,723.8 875.5,727.6 879.7,723.8 882.9,711.3 887,694.5 889.2,679.8 890.6,665 893.4,659.8 897.6,655.6 902.8,654.6 907,650.4 911.2,654.6 916.3,654.5 920.5,647.2 923.6,640.9 927.8,637 932,629.3 936.2,618.2 940,606 945.2,594.5 950.9,586.6 955.1,586.2 960.8,594.8 967,602.6 971.9,613.6 978.2,624 983.5,632.5 985,611.5 987.7,592.6 990.8,578 994,563.3 997.1,546.6 1000.3,530.8 1002.8,510.9 1006.6,524.5 1009.7,521.4 1013.9,511.9 1019.2,504.6 1026.5,501 1030.7,507.7 1035.5,515 1039.1,525.6 1043.4,539.5 1047,550 1051.7,553.2 1055.2,554.4 1062.3,564.5 1067,566 1071.7,574.3 1075.2,582.5 1081,583.2 1088,583.7 1094,581.8 1101,583.7 1108,585.6 1113.9,590.7 1119.8,591.9 1124.4,600 1130.3,612.5 1135.5,617.5 1140.4,624.4 1147.9,633.8 1151.4,645 1153.8,658 1157.3,676.8 1160.8,693.2 1164.3,709.6 1167.8,723.7 1170.9,729.6 1176,730 1181.9,726.5 1187.8,720.2 1192.5,714.3 1195.3,712.7 1198.3,715 1201,715.5" fill="none" stroke="#fdfdd0" stroke-width="2.05" stroke-linejoin="round"/>
</svg>
<div class="redbox"></div>
<span class="ind" style="left:7px">SMA(20), SMA(100), BB(20,2)</span>
<span class="ind" style="left:164px">0.9026 0.9001 0.8987 0.8982 0.9019</span>
<span class="tl" style="left:2px">17 Dec 2018</span><span class="tl" style="left:66px">18 Dec 07:00</span><span class="tl" style="left:130px">18 Dec 23:00</span><span class="tl" style="left:194px">19 Dec 15:00</span><span class="tl" style="left:258px">20 Dec 07:00</span><span class="tl" style="left:322px">20 Dec 23:00</span><span class="tl" style="left:386px">21 Dec 15:00</span><span class="tl" style="left:450px">24 Dec 07:00</span><span class="tl" style="left:514px">26 Dec 00:00</span><span class="tl" style="left:578px">26 Dec 16:00</span><span class="tl" style="left:642px">27 Dec 08:00</span><span class="tl" style="left:706px">28 Dec 00:00</span><span class="tl" style="left:770px">28 Dec 16:00</span><span class="tl" style="left:834px">31 Dec 08:00</span><span class="tl" style="left:898px">2 Jan 03:00</span><span class="tl" style="left:962px">2 Jan 19:00</span><span class="tl" style="left:1026px">3 Jan 11:00</span><span class="tl" style="left:1090px">4 Jan 03:00</span><span class="tl" style="left:1154px">4 Jan 19:00</span>
<div class="dlg">
  <div class="title">Custom Indicator - price_ratio_0.0.5</div>
  <div class="help">?</div>
  <div class="close"><svg width="45" height="20" viewBox="0 0 45 20"><path d="M19 6.5 L26 13.5 M26 6.5 L19 13.5" stroke="#fff" stroke-width="1.5" fill="none"/></svg></div>
  <div class="client">
    <div class="tab" style="left:8px;width:42px">About</div>
    <div class="tab" style="left:49px;width:53px">Common</div>
    <div class="tab sel" style="left:101px;width:46px">Inputs</div>
    <div class="tab" style="left:146px;width:41px">Colors</div>
    <div class="tab" style="left:186px;width:44px">Levels</div>
    <div class="tab" style="left:229px;width:69px">Visualization</div>
    <div class="page"></div>
    <div class="list">
      <div class="hdr"><span style="left:6px">Variable</span><span style="left:232px">Value</span></div>
      <div class="row" style="top:25px"><span class="ic"><svg width="16" height="16" viewBox="0 0 16 16"><defs><linearGradient id="gab" x1="0" y1="0" x2="0" y2="1"><stop offset="0" stop-color="#f3e88d"/><stop offset="1" stop-color="#d9cb5f"/></linearGradient></defs><path d="M1.5 2.5 Q1.5 0.5 3.5 0.5 L11.5 0.5 L15.5 4.5 L15.5 13 L14 15 L12.5 13.2 L11 14.5 L9.5 13 L8 14.5 L6.5 13 L5 14.5 L3.5 13 L1.5 14.8 Z" fill="url(#gab)" stroke="#b8a948" stroke-width="1"/><path d="M11.5 0.5 L11.5 4.5 L15.5 4.5 Z" fill="#fbf6c8" stroke="#b8a948" stroke-width="0.8"/><text x="1.8" y="10.8" font-family="Liberation Sans, sans-serif" font-size="9" font-weight="normal" fill="#4a4216" letter-spacing="-0.4">ab</text></svg></span><span class="n">1st Pair</span><span class="v">EURUSD</span></div>
      <div class="row alt" style="top:45px"><span class="ic"><svg width="16" height="16" viewBox="0 0 16 16"><defs><linearGradient id="gab" x1="0" y1="0" x2="0" y2="1"><stop offset="0" stop-color="#f3e88d"/><stop offset="1" stop-color="#d9cb5f"/></linearGradient></defs><path d="M1.5 2.5 Q1.5 0.5 3.5 0.5 L11.5 0.5 L15.5 4.5 L15.5 13 L14 15 L12.5 13.2 L11 14.5 L9.5 13 L8 14.5 L6.5 13 L5 14.5 L3.5 13 L1.5 14.8 Z" fill="url(#gab)" stroke="#b8a948" stroke-width="1"/><path d="M11.5 0.5 L11.5 4.5 L15.5 4.5 Z" fill="#fbf6c8" stroke="#b8a948" stroke-width="0.8"/><text x="1.8" y="10.8" font-family="Liberation Sans, sans-serif" font-size="9" font-weight="normal" fill="#4a4216" letter-spacing="-0.4">ab</text></svg></span><span class="n">2nd Pair</span><span class="v">GBPUSD</span></div>
      <div class="row" style="top:65px"><span class="ic"><svg width="16" height="16" viewBox="0 0 16 16"><defs><linearGradient id="gnum" x1="0" y1="0" x2="0" y2="1"><stop offset="0" stop-color="#b9d6f5"/><stop offset="1" stop-color="#7eabe0"/></linearGradient></defs><path d="M1.5 2.5 Q1.5 0.5 3.5 0.5 L11.5 0.5 L15.5 4.5 L15.5 13 L14 15 L12.5 13.2 L11 14.5 L9.5 13 L8 14.5 L6.5 13 L5 14.5 L3.5 13 L1.5 14.8 Z" fill="url(#gnum)" stroke="#5f8fcb" stroke-width="1"/><path d="M11.5 0.5 L11.5 4.5 L15.5 4.5 Z" fill="#e3effb" stroke="#5f8fcb" stroke-width="0.8"/><text x="2" y="10.5" font-family="Liberation Sans, sans-serif" font-size="7" font-weight="bold" fill="#0f2a4d" letter-spacing="-0.4">123</text></svg></span><span class="n">MA1: Fast Period</span><span class="v">20</span></div>
      <div class="row alt" style="top:85px"><span class="ic"><svg width="16" height="16" viewBox="0 0 16 16"><defs><linearGradient id="gnum" x1="0" y1="0" x2="0" y2="1"><stop offset="0" stop-color="#b9d6f5"/><stop offset="1" stop-color="#7eabe0"/></linearGradient></defs><path d="M1.5 2.5 Q1.5 0.5 3.5 0.5 L11.5 0.5 L15.5 4.5 L15.5 13 L14 15 L12.5 13.2 L11 14.5 L9.5 13 L8 14.5 L6.5 13 L5 14.5 L3.5 13 L1.5 14.8 Z" fill="url(#gnum)" stroke="#5f8fcb" stroke-width="1"/><path d="M11.5 0.5 L11.5 4.5 L15.5 4.5 Z" fill="#e3effb" stroke="#5f8fcb" stroke-width="0.8"/><text x="2" y="10.5" font-family="Liberation Sans, sans-serif" font-size="7" font-weight="bold" fill="#0f2a4d" letter-spacing="-0.4">123</text></svg></span><span class="n">MA2: Slow Period</span><span class="v">100</span></div>
      <div class="row hl" style="top:105px"><span class="ic"><svg width="16" height="16" viewBox="0 0 16 16"><defs><linearGradient id="gnum" x1="0" y1="0" x2="0" y2="1"><stop offset="0" stop-color="#b9d6f5"/><stop offset="1" stop-color="#7eabe0"/></linearGradient></defs><path d="M1.5 2.5 Q1.5 0.5 3.5 0.5 L11.5 0.5 L15.5 4.5 L15.5 13 L14 15 L12.5 13.2 L11 14.5 L9.5 13 L8 14.5 L6.5 13 L5 14.5 L3.5 13 L1.5 14.8 Z" fill="url(#gnum)" stroke="#5f8fcb" stroke-width="1"/><path d="M11.5 0.5 L11.5 4.5 L15.5 4.5 Z" fill="#e3effb" stroke="#5f8fcb" stroke-width="0.8"/><text x="2" y="10.5" font-family="Liberation Sans, sans-serif" font-size="7" font-weight="bold" fill="#0f2a4d" letter-spacing="-0.4">123</text></svg></span><span class="n">MA1/2: Mode</span></div>
      <div class="row alt" style="top:125px"><span class="ic"><svg width="16" height="16" viewBox="0 0 16 16"><defs><linearGradient id="gnum" x1="0" y1="0" x2="0" y2="1"><stop offset="0" stop-color="#b9d6f5"/><stop offset="1" stop-color="#7eabe0"/></linearGradient></defs><path d="M1.5 2.5 Q1.5 0.5 3.5 0.5 L11.5 0.5 L15.5 4.5 L15.5 13 L14 15 L12.5 13.2 L11 14.5 L9.5 13 L8 14.5 L6.5 13 L5 14.5 L3.5 13 L1.5 14.8 Z" fill="url(#gnum)" stroke="#5f8fcb" stroke-width="1"/><path d="M11.5 0.5 L11.5 4.5 L15.5 4.5 Z" fill="#e3effb" stroke="#5f8fcb" stroke-width="0.8"/><text x="2" y="10.5" font-family="Liberation Sans, sans-serif" font-size="7" font-weight="bold" fill="#0f2a4d" letter-spacing="-0.4">123</text></svg></span><span class="n">BB: Period</span></div>
      <div class="row" style="top:145px"><span class="ic"><svg width="16" height="16" viewBox="0 0 16 16"><defs><linearGradient id="gnum" x1="0" y1="0" x2="0" y2="1"><stop offset="0" stop-color="#b9d6f5"/><stop offset="1" stop-color="#7eabe0"/></linearGradient></defs><path d="M1.5 2.5 Q1.5 0.5 3.5 0.5 L11.5 0.5 L15.5 4.5 L15.5 13 L14 15 L12.5 13.2 L11 14.5 L9.5 13 L8 14.5 L6.5 13 L5 14.5 L3.5 13 L1.5 14.8 Z" fill="url(#gnum)" stroke="#5f8fcb" stroke-width="1"/><path d="M11.5 0.5 L11.5 4.5 L15.5 4.5 Z" fill="#e3effb" stroke="#5f8fcb" stroke-width="0.8"/><text x="2" y="10.5" font-family="Liberation Sans, sans-serif" font-size="7" font-weight="bold" fill="#0f2a4d" letter-spacing="-0.4">123</text></svg></span><span class="n">BB: Deviation</span></div>
      <div class="coldiv"></div>
      <div class="combo"><span>Simple</span><svg style="position:absolute;right:3px;top:5px" width="10" height="9" viewBox="0 0 10 9"><path d="M1 1.5 L5 6 L9 1.5" stroke="#444" stroke-width="1.6" fill="none"/></svg></div>
    </div>
    <div class="btn" style="left:483px;top:169px;width:103px">Load</div>
    <div class="btn" style="left:483px;top:202px;width:103px">Save</div>
    <div class="btn def" style="left:359px;top:240px;width:73px">OK</div>
    <div class="btn" style="left:440px;top:240px;width:73px">Cancel</div>
    <div class="btn" style="left:521px;top:240px;width:73px">Reset</div>
    <svg style="position:absolute;left:592px;top:260px" width="8" height="8" viewBox="0 0 8 8" shape-rendering="crispEdges" fill="#bcbcbc"><rect x="6" y="0" width="2" height="2"/><rect x="3" y="3" width="2" height="2"/><rect x="6" y="3" width="2" height="2"/><rect x="0" y="6" width="2" height="2"/><rect x="3" y="6" width="2" height="2"/><rect x="6" y="6" width="2" height="2"/></svg>
  </div>
  <div class="drop" style="left:254px;top:195px"><div class="s">Simple</div><div>Exponential</div><div>Smoothed</div><div>Linear weighted</div></div>
</div>
</body>
</html>
